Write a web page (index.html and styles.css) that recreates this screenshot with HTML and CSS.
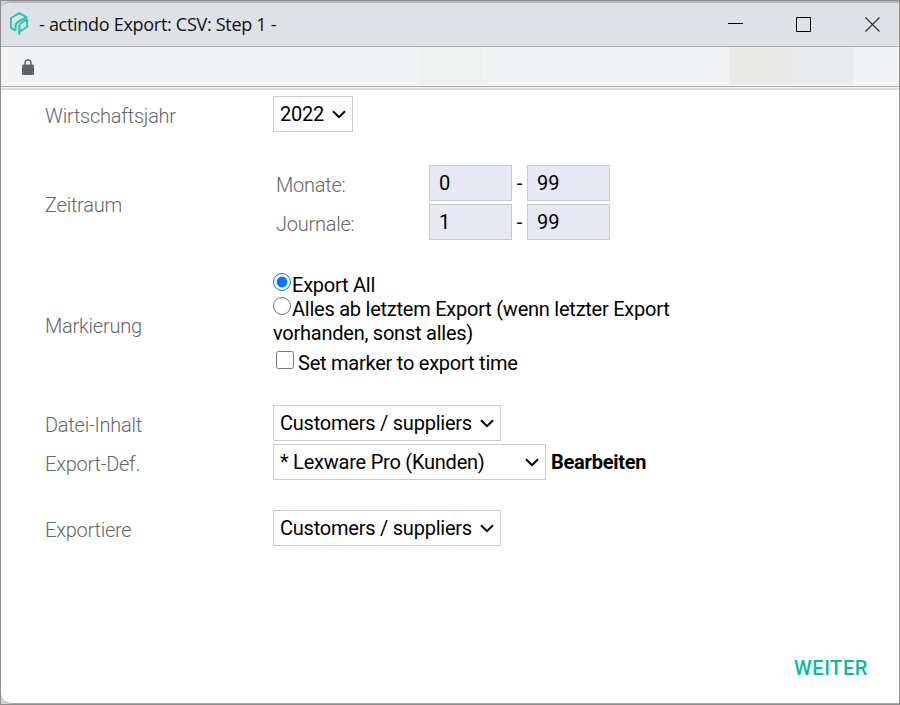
FILE: index.html
```html
<!DOCTYPE html>
<html lang="de">
<head>
<meta charset="utf-8">
<title>- actindo Export: CSV: Step 1 -</title>
<link rel="stylesheet" href="styles.css">
</head>
<body>
<div class="window">
  <header class="titlebar">
    <svg class="logo" viewBox="0 0 20 24" width="20" height="24"><path d="M6.300 18.600 1.900 15.700V6L10.200 1.200l7.300 4-7.200 3.900Q6.600 11 6.600 14v4.600M18.100 6.900V15l-5 3-2.800 1.500v3.200M10.300 22.500V14.500q0-2.600 2.500-4l5.500-3.300"/></svg>
    <span class="title">- actindo Export: CSV: Step 1 -</span>
    <svg class="controls" viewBox="0 0 154 16" width="154" height="16"><path class="line" d="M0 6.500h15M68.500 .5h14v14h-14z"/><path class="cross" d="M137.500 .5l14 14m0-14l-14 14"/></svg>
  </header>
  <div class="toolbar">
    <svg class="lock" viewBox="0 0 12 16" width="12" height="16"><path fill-rule="evenodd" d="M1.500 5.500H2.300V4a3.700 3.700 0 0 1 7.400 0v1.500h.8A1.500 1.500 0 0 1 12 7v7.500a1.500 1.500 0 0 1-1.500 1.500h-9A1.500 1.500 0 0 1 0 14.500V7a1.500 1.500 0 0 1 1.500-1.500ZM3.700 5.500h4.600V4a2.300 2.300 0 0 0-4.600 0Z"/></svg>
    <span class="patch patch-a"></span>
    <span class="patch patch-b"></span>
    <span class="patch patch-c"></span>
  </div>
  <main class="form">
    <div class="row year">
      <label class="label">Wirtschaftsjahr</label>
      <div class="select w-year"><select><option>2022</option></select><svg viewBox="0 0 14 9"><path d="M1 1.200l6 6 6-6"/></svg></div>
    </div>
    <div class="row period">
      <span class="label">Zeitraum</span>
      <div class="ranges">
        <span class="label">Monate:</span><input class="num" value="0"><span class="dash">-</span><input class="num" value="99">
        <span class="label">Journale:</span><input class="num" value="1"><span class="dash">-</span><input class="num" value="99">
      </div>
    </div>
    <div class="row marking">
      <span class="label">Markierung</span>
      <div class="choices">
        <div><input type="radio" name="mark" checked>Export All</div>
        <div><input type="radio" name="mark">Alles ab letztem Export (wenn letzter Export vorhanden, sonst alles)</div>
        <div class="marker"><input type="checkbox">Set marker to export time</div>
      </div>
    </div>
    <div class="row content">
      <label class="label">Datei-Inhalt</label>
      <div class="select w-mid"><select><option>Customers / suppliers</option></select><svg viewBox="0 0 14 9"><path d="M1 1.200l6 6 6-6"/></svg></div>
    </div>
    <div class="row definition">
      <label class="label">Export-Def.</label>
      <div class="select w-wide"><select><option>* Lexware Pro (Kunden)</option></select><svg viewBox="0 0 14 9"><path d="M1 1.200l6 6 6-6"/></svg></div>
      <b class="edit">Bearbeiten</b>
    </div>
    <div class="row export">
      <label class="label">Exportiere</label>
      <div class="select w-mid"><select><option>Customers / suppliers</option></select><svg viewBox="0 0 14 9"><path d="M1 1.200l6 6 6-6"/></svg></div>
    </div>
  </main>
  <footer class="footer"><span class="next">WEITER</span></footer>
</div>
</body>
</html>
```
FILE: styles.css
```css
* { box-sizing: border-box; }
body {
  margin: 0;
  background: #d4d4d4;
  font: 20px/24px Roboto, sans-serif;
  letter-spacing: -0.24px;
  color: #000;
  border: 1px solid #8f8f8f;
  height: 705px;
}
.window {
  height: 703px;
  display: flex;
  flex-direction: column;
  overflow: hidden;
  background: #fff;
  border-top: 2px solid #b4b4b6;
  border-bottom: 1px solid #a6a6a6;
  border-radius: 10px 0 0 10px;
}
.titlebar {
  height: 44px;
  flex: none;
  display: flex;
  align-items: center;
  padding: 0 17px 0 8px;
  background: #dee1e6;
  border-bottom: 1px solid #acacae;
}
.logo { fill: none; stroke: #22c7ae; stroke-width: 2; stroke-linejoin: round; margin-top: -1px; }
.title {
  margin: -1px 0 0 10px;
  font: 18px/24px "Open Sans", sans-serif;
  letter-spacing: -0.29px;
  color: #111;
  white-space: nowrap;
}
.controls { margin-left: auto; fill: none; stroke: #000; }
.controls .cross { stroke: #333; stroke-width: 1.2; }
.toolbar {
  height: 43px;
  flex: none;
  display: flex;
  align-items: flex-start;
  background: linear-gradient(#f1f3f4 39px, #acacac 39px 40px, #f1f3f4 40px 41px, #dcdcdc 41px);
}
.lock { margin: 12px 0 0 21px; fill: #5f6368; }
.patch { height: 37px; flex: none; }
.patch-a { width: 61px; margin-left: 387px; background: #eff1f0; }
.patch-b { width: 62px; margin-left: 247px; background: #e9e9e7; }
.patch-c { width: 62px; background: #e8eaec; }
.form { padding: 6px 0 0 44px; }
.row { display: grid; grid-template-columns: 228px max-content auto; align-items: center; justify-content: start; }
.label { color: #666; font-weight: 300; padding-top: 4px; }
.year { height: 36px; }
.period { height: 75px; margin-top: 33px; }
.period > .label { padding-top: 5px; }
.marking { height: 103px; margin-top: 33px; }
.marking > .label { padding-top: 2px; }
.content { height: 36px; margin-top: 29px; }
.definition { height: 36px; margin-top: 3px; }
.export { height: 36px; margin-top: 30px; }
.select { position: relative; height: 36px; }
.select select {
  appearance: none;
  width: 100%;
  height: 36px;
  padding: 0 6px;
  border: 1px solid #ccc;
  border-radius: 0;
  background: #fff;
  font: 20px/24px Roboto, sans-serif;
  letter-spacing: -0.23px;
  color: #000;
}
.select svg {
  position: absolute;
  right: 7px;
  top: 14px;
  width: 14px;
  height: 9px;
  fill: none;
  stroke: #000;
  stroke-width: 2;
}
.w-year { width: 80px; }
.w-mid { width: 228px; }
.w-wide { width: 273px; }
.edit { margin-left: 5px; font-weight: 700; }
.ranges { display: grid; grid-template-columns: 153px 83px 15px 83px; row-gap: 3px; align-items: center; padding-left: 3px; }
.num {
  width: 83px;
  height: 36px;
  padding: 0 9px;
  border: 1px solid #c9cacf;
  border-radius: 0;
  background: #e6e8f4;
  font: 20px/24px Roboto, sans-serif;
  letter-spacing: -0.1px;
  color: #000;
}
.dash { text-align: center; }
.choices { width: 420px; margin-top: -2px; }
.choices input { width: 18px; height: 18px; margin: 0 1px 0 0; position: relative; top: -4px; vertical-align: middle; }
.marker { margin-top: 6px; padding-left: 3px; }
.choices .marker input { margin-right: 4px; }
.footer { margin-top: auto; padding: 0 31px 23px; text-align: right; }
.next { color: #0cb9a2; font-weight: 500; letter-spacing: 0.6px; }
```
